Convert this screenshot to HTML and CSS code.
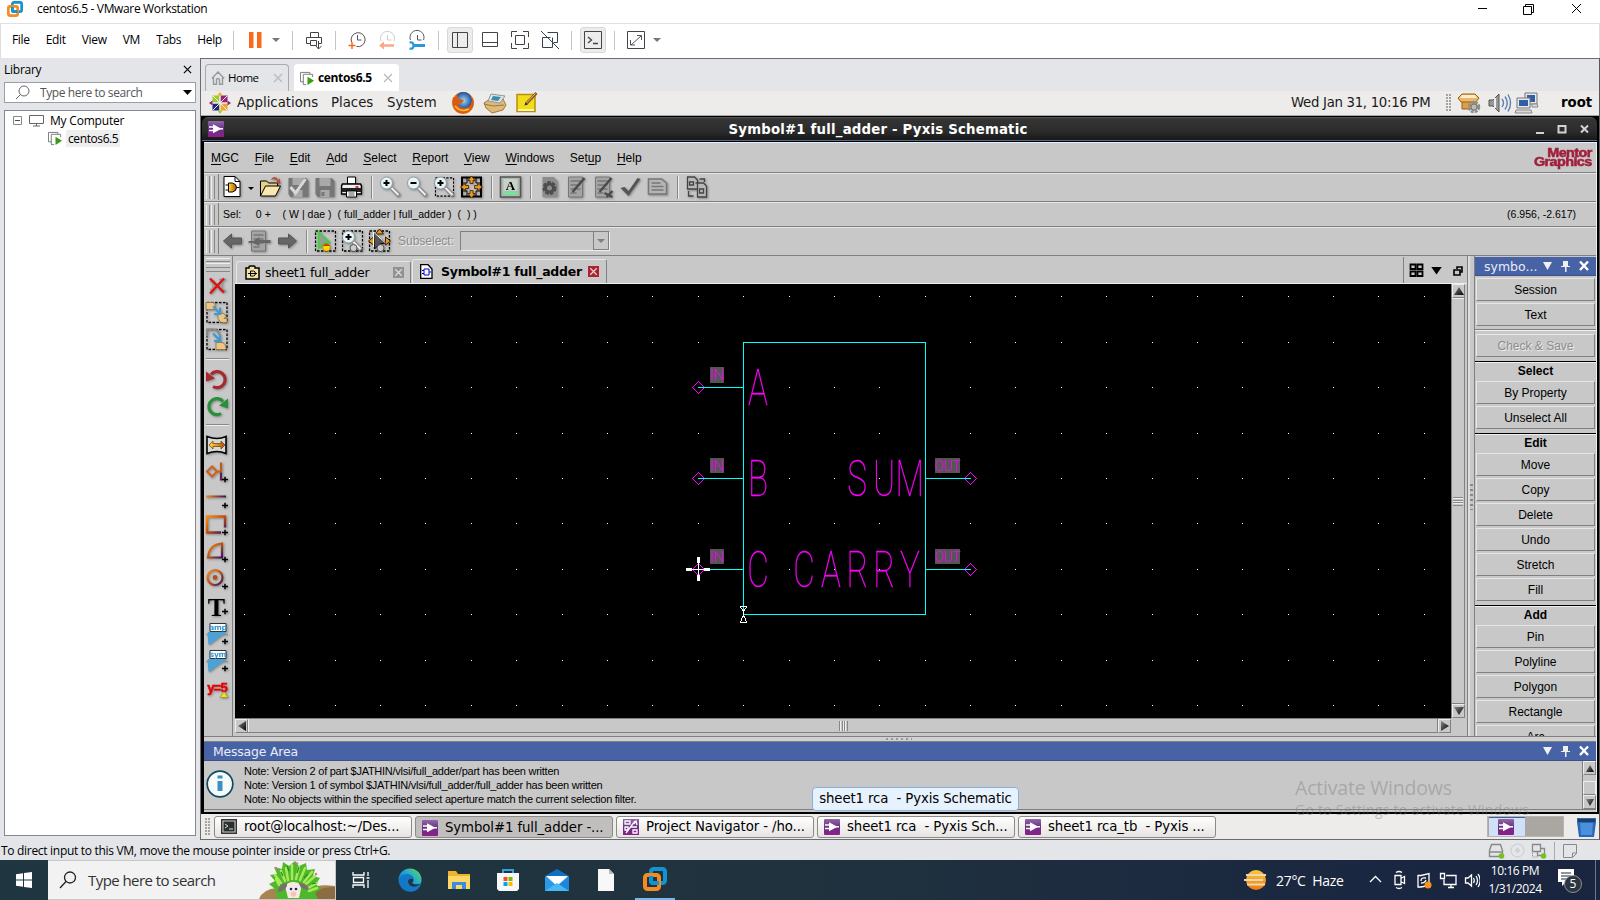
FILE: index.html
```html
<!DOCTYPE html>
<html lang="en">
<head>
<meta charset="utf-8">
<title>centos6.5 - VMware Workstation</title>
<link rel="stylesheet" href="styles.css">
</head>
<body>
<svg class="defs" width="0" height="0">
<defs>
<linearGradient id="purple" x1="0" y1="0" x2="0" y2="1"><stop offset="0" stop-color="#8f6aa5"/><stop offset=".5" stop-color="#6b2f86"/><stop offset="1" stop-color="#8d1f8a"/></linearGradient>
<linearGradient id="ember" x1="0" y1="0" x2="1" y2="1"><stop offset="0" stop-color="#ff8a10"/><stop offset=".5" stop-color="#c05010"/><stop offset="1" stop-color="#3a1060"/></linearGradient>
<linearGradient id="emberH"><stop offset="0" stop-color="#ff8a10"/><stop offset="1" stop-color="#3a1060"/></linearGradient>
<linearGradient id="gold"><stop offset="0" stop-color="#ffe030"/><stop offset="1" stop-color="#b05010"/></linearGradient>
<linearGradient id="edge" x1="0" y1="1" x2="1" y2="0"><stop offset="0" stop-color="#0b5cad"/><stop offset=".5" stop-color="#1b9de2"/><stop offset="1" stop-color="#5be05a"/></linearGradient>
<linearGradient id="sun" x1="0" y1="0" x2="0" y2="1"><stop offset="0" stop-color="#ffc83a"/><stop offset="1" stop-color="#f07a10"/></linearGradient>
<linearGradient id="dark" x1="0" y1="0" x2="1" y2="1"><stop offset="0" stop-color="#888"/><stop offset="1" stop-color="#000"/></linearGradient>
<radialGradient id="globe"><stop offset="0" stop-color="#9fd8f5"/><stop offset="1" stop-color="#1d4f9a"/></radialGradient>
<symbol id="pyxis" viewBox="0 0 16 16"><rect width="16" height="16" rx="1" fill="url(#purple)"/><path d="M1 6h5M1 9.500h5M11 7.800h4" stroke="#fff" stroke-width="1.400"/><path d="M5 3.200l8.500 4.600L5 12.300z" fill="#fff"/></symbol>
<symbol id="vmw" viewBox="0 0 24 24"><rect x="8" y="2" width="14" height="14" rx="2.500" fill="none" stroke="#1094d2" stroke-width="4"/><rect x="2" y="8" width="14" height="14" rx="2.500" fill="none" stroke="#f68b1f" stroke-width="4"/><path d="M8 9v5q0 2 2 2h6" fill="none" stroke="#1094d2" stroke-width="4"/></symbol>
<symbol id="vmrun" viewBox="0 0 16 16"><path d="M3.500 11.500h-3V1.500h10v2M6.500 14.500h-3V3.500h10v3" fill="none" stroke="#777"/><path d="M8 6l7 4.500L8 15z" fill="#3c9a10"/></symbol>
<symbol id="cx" viewBox="0 0 10 10"><path d="M1 1l8 8M9 1l-8 8" fill="none" stroke="currentColor" stroke-width="1.300"/></symbol>
<symbol id="bx" viewBox="0 0 12 12"><rect width="12" height="12" fill="currentColor"/><path d="M2.500 2.500l7 7M9.500 2.500l-7 7" stroke="#ddd" stroke-width="1.300"/></symbol>
<symbol id="plus" viewBox="0 0 6 6"><path d="M3 0v6M0 3h6" stroke="#000" stroke-width="1.500"/></symbol>
<symbol id="lens" viewBox="0 0 22 22"><path d="M12 12l8 8" stroke="#888" stroke-width="4"/><path d="M12 12l7 7" stroke="#eee" stroke-width="2"/><circle cx="7" cy="7" r="6" fill="#e8f4f6" stroke="#8aa0a8"/></symbol>
<symbol id="page" viewBox="0 0 22 22"><path d="M2.500.500h11l5 5v15h-16z" fill="#fff" stroke="#000"/><path d="M13.500.500v5h5" fill="none" stroke="#000"/></symbol>
<symbol id="gpage" viewBox="0 0 22 22"><path d="M3 1h14v20H3z" fill="#a4a4a4" stroke="#777"/><path d="M5 5h10M5 9h10M5 13h10M5 17h6" stroke="#777" stroke-width="1.300"/></symbol>
<symbol id="marq" viewBox="0 0 22 22"><rect x="1" y="1" width="20" height="20" fill="none" stroke="#000" stroke-dasharray="2.500 1.500" stroke-width="1.300"/></symbol>
<symbol id="dock" viewBox="0 0 50 12"><path d="M1 2h9l-4.500 8z" fill="#f0f0f0"/><path d="M21 1h5v5h2v1h-9V6h2zM23 7h1.500v5H23z" fill="#eee"/><path d="M38 1.500l8 8.500M46 1.500L38 10" stroke="#fff" stroke-width="2.400"/></symbol>
<symbol id="printer" viewBox="0 0 22 22"><path d="M7 1h8v7H7z" fill="#fff" stroke="#000"/><path d="M2 8h18l1 2v8H1v-8z" fill="#eee" stroke="#000" stroke-width="1.500"/><path d="M1 12h20v4H1z" fill="#222"/><path d="M6 15h10v6H6z" fill="#fff" stroke="#000"/><path d="M8 17h6M8 19h6" stroke="#555"/><path d="M15 11h3" stroke="#d00" stroke-width="1.500"/></symbol>
<g id="dots"><path stroke="#fff" d="M9 .5h1M54 .5h1M100 .5h1M145 .5h1M190 .5h1M236 .5h1M281 .5h1M327 .5h1M372 .5h1M417 .5h1M463 .5h1M508 .5h1M554 .5h1M599 .5h1M644 .5h1M690 .5h1M735 .5h1M780 .5h1M826 .5h1M871 .5h1M917 .5h1M962 .5h1M1007 .5h1M1053 .5h1M1098 .5h1M1143 .5h1M1189 .5h1"/></g>
</defs>
</svg>

<header class="titlebar">
  <svg class="app-logo" width="16" height="16"><use href="#vmw"/></svg>
  <span class="app-title">centos6.5 - VMware Workstation</span>
  <svg class="win-ctl" width="110" height="18" fill="none" stroke="#000"><path d="M3 8.500h9M48.500 6.500h8v8h-8zM50.500 6.500v-2h8v8h-2M97 4l9 9M106 4l-9 9"/></svg>
</header>

<nav class="vmbar">
  <div class="vmmenu"><span>File</span><span>Edit</span><span>View</span><span>VM</span><span>Tabs</span><span>Help</span></div>
  <i class="vsep w14"></i>
  <svg class="pause" width="24" height="24"><path d="M6 4h4.500v16H6zM14 4h4.500v16H14z" fill="#f96a1f"/></svg>
  <svg width="18" height="24"><path d="M5 10h8l-4 4z" fill="#777"/></svg>
  <i class="vsep w14"></i>
  <svg width="30" height="24" fill="none" stroke="#444"><path d="M11.500 9.500v-5h8v5M7.500 9.500h15v6h-3M7.500 9.500v6h4M11.500 12.500h6v5h-6zM17 18l2.500 3 3-3"/><path d="M19.500 13v8"/></svg>
  <i class="vsep w13"></i>
  <svg width="30" height="24" fill="none" stroke="#555"><path d="M9.500 14a7 7 0 1 1 5 4.500M15.500 7v5h4"/><path d="M10 14v7M6.500 17.500h7" stroke="#f96a1f" stroke-width="1.500"/></svg>
  <svg width="30" height="24" fill="none" stroke="#ccc"><path d="M9 13a7 7 0 1 1 13 0M15.500 7v5h4"/><path d="M10 17.500h12" stroke="#fba888" stroke-width="2.500"/><path d="M7 17.500l5-4v8z" fill="#fba888" stroke="none"/></svg>
  <svg width="30" height="24" fill="none" stroke="#555"><path d="M8.500 12a7 7 0 1 1 13 0M15.500 7v5h4"/><path d="M11 17.500h12" stroke="#2a97dc" stroke-width="3"/><path d="M7.500 14.500q4-1 4 3t-4 3" stroke="#2a97dc" stroke-width="2.200"/></svg>
  <i class="vsep w13"></i>
  <span class="toggled"><svg width="24" height="24" fill="none" stroke="#444"><path d="M4.500 4.500h15v15h-15zM9.500 4.500v15"/></svg></span>
  <svg width="30" height="24" fill="none" stroke="#444"><path d="M7.500 4.500h15v14h-15zM7.500 14.500h15"/></svg>
  <svg width="30" height="24" fill="none" stroke="#444"><path d="M6.500 9V3.500H12M18 3.500h5.500V9M23.500 15v5.500H18M12 20.500H6.500V15M10.500 7.500h9v9h-9z"/></svg>
  <svg width="30" height="24" fill="none" stroke="#35424e"><path d="M12.500 4.500h10v10h-4M17.500 9.500v10h-10v-10h8M6 3l18 18"/></svg>
  <i class="vsep w13"></i>
  <span class="toggled"><svg width="24" height="24" fill="none" stroke="#444"><path d="M3.500 3.500h17v17h-17z"/><path d="M7 9l3.500 3L7 15M12 15.500h5" stroke-width="1.300"/></svg></span>
  <i class="vsep w13"></i>
  <svg width="30" height="24" fill="none" stroke="#444"><path d="M6.500 3.500h17v17h-17z"/><path d="M16 7.500h4.500V12M9.500 12v5H14M20 8l-10 9" stroke-width=".9"/></svg>
  <svg width="12" height="24"><path d="M2 10h8l-4 4z" fill="#777"/></svg>
</nav>

<div class="workspace">
  <aside class="library">
    <div class="lib-head"><span>Library</span><svg class="lib-x" width="9" height="9"><use href="#cx"/></svg></div>
    <div class="lib-search">
      <svg width="16" height="16" fill="none" stroke="#666"><circle cx="9" cy="6" r="5"/><path d="M5.500 9.500L1 14"/></svg>
      <span>Type here to search</span>
      <svg width="9" height="5"><path d="M0 0h9L4.500 5z"/></svg>
    </div>
    <div class="tree">
      <div class="node root"><svg width="9" height="9" fill="none"><path d="M.5.500h8v8h-8z" stroke="#888"/><path d="M2 4.500h5" stroke="#356"/></svg><svg width="15" height="12" fill="none" stroke="#666"><path d="M.5.500h14v8h-14zM4 11h7M7.500 9v2"/></svg><span>My Computer</span></div>
      <div class="node child"><svg width="15" height="15"><use href="#vmrun"/></svg><span>centos6.5</span></div>
    </div>
  </aside>

  <section class="guest">
    <div class="vmtabs">
      <div class="vmtab home"><svg width="14" height="14" fill="none" stroke="#999" stroke-width="1.400"><path d="M.8 7.500L7 1l6.200 6.500M2.500 6.500v6.800h3V9q0-1.500 1.500-1.500T8.500 9v4.300h3V6.500"/></svg><span>Home</span><svg class="tx" width="10" height="10"><use href="#cx"/></svg></div>
      <div class="vmtab active"><svg width="15" height="15"><use href="#vmrun"/></svg><span>centos6.5</span><svg class="tx" width="10" height="10"><use href="#cx"/></svg></div>
    </div>

    <div class="gpanel">
      <svg width="22" height="22"><g transform="translate(11 11)"><path d="M-7.500-7.500h7v7h-7z" fill="#9ccd2a"/><path d="M.5-7.500h7v7h-7z" fill="#932279"/><path d="M-7.500.500h7v7h-7z" fill="#262577"/><path d="M.5.500h7v7h-7z" fill="#efa724"/><path d="M0-11l2.500 3.500h-5z" fill="#efa724"/><path d="M11 0L7.500 2.500v-5z" fill="#932279"/><path d="M0 11l2.500-3.500h-5z" fill="#9ccd2a"/><path d="M-11 0l3.500 2.500v-5z" fill="#932279"/><path d="M-7-7L7 7M7-7L-7 7M0-7V7M-7 0H7" stroke="#eee" stroke-width="1"/></g></svg>
      <span class="g1">Applications</span><span class="g2">Places</span><span class="g3">System</span>
      <svg class="ff" width="24" height="24"><circle cx="12" cy="12" r="11" fill="#e8701a"/><circle cx="12.500" cy="9.500" r="8.500" fill="url(#globe)"/><path d="M2 6Q0 17 8 21.500q9 3 13.500-5Q24 10 21 6q1 9-6 11-7 .5-8-4l4-1 2-3-5-1-2-4-2 3z" fill="#d95b12"/><path d="M4 15q6 7 14 3" fill="none" stroke="#ffc030" stroke-width="1.500"/></svg>
      <svg width="32" height="24"><path d="M5 12l6-4h13l3 6-3 5-11 3-6-5z" fill="#e0b878" stroke="#a07840"/><path d="M12 3l14 2-5 7-12-2z" fill="#dce6ea" stroke="#8a9a9a"/><path d="M14 5l8 1-3 4-7-1z" fill="#3f8ba8"/><path d="M5 13l9 2 11-1" fill="none" stroke="#a07840"/></svg>
      <svg width="30" height="24"><path d="M6 3.500h18v17H6z" fill="#f3dc1c" stroke="#b8900a" stroke-width="1.500"/><path d="M7 18h16v2H7z" fill="#fff6b0"/><path d="M25.500 2L15 13" stroke="#8a5a20" stroke-width="3"/><path d="M24.500 2.500L15.500 12" stroke="#e2b66a"/><path d="M13.500 14.500l1-3 2 2z" fill="#222"/></svg>
      <span class="gclock">Wed Jan 31, 10:16 PM</span>
      <i class="grip"></i>
      <svg class="box" width="24" height="24"><path d="M5 9h14v9H5z" fill="#dba04e" stroke="#9a6010"/><path d="M5 3h13l4 4-3 4H4L1 7z" fill="#eeb766" stroke="#9a6010"/><path d="M5 4h13l2 3H3z" fill="#fbeccd"/><circle cx="17" cy="16" r="4.500" fill="none" stroke="#8c8f8c" stroke-width="3.500" stroke-dasharray="2.600 1"/><circle cx="17" cy="16" r="3" fill="#bbb" stroke="#777"/></svg>
      <svg width="29" height="24"><path d="M4 9h4l6-6v18l-6-6H4z" fill="#999" stroke="#555"/><path d="M10 7v10" stroke="#eee" stroke-width="2"/><path d="M17 8q3 4 0 8M20 5.500q4.500 6.500 0 13M23 3.500q5 8.500 0 17" fill="none" stroke="#5b80b8" stroke-width="1.400"/></svg>
      <svg width="28" height="24"><path d="M11 2h12v11H11z" fill="#e8e8e8" stroke="#777"/><path d="M13 4h8v7h-8z" fill="#2f5fa6"/><path d="M3 7h13v10H3z" fill="#e8e8e8" stroke="#777"/><path d="M5 9h9v6H5z" fill="#2f5fa6"/><path d="M2 19h15l1 3H1zM18 13h5l1 3h-6z" fill="#ddd" stroke="#888"/></svg>
      <b class="groot">root</b>
    </div>

    <div class="desk">
      <div class="xtitle"><svg width="16" height="16"><use href="#pyxis"/></svg><b>Symbol#1 full_adder - Pyxis Schematic</b><svg width="54" height="14" fill="none" stroke="#d2d2d2" stroke-width="2"><path d="M1 11h8M23.500 4h7v6.500h-7z" /><path d="M46 3.500l7 7M53 3.500l-7 7"/></svg></div>
      <div class="app">
        <div class="row menu">
          <span><u>M</u>GC</span><span><u>F</u>ile</span><span><u>E</u>dit</span><span><u>A</u>dd</span><span><u>S</u>elect</span><span><u>R</u>eport</span><span><u>V</u>iew</span><span><u>W</u>indows</span><span>Set<u>u</u>p</span><span><u>H</u>elp</span>
          <div class="mentor"><b>Mentor</b><b>Graphics</b></div>
        </div>

        <div class="row tools">
          <i class="handle"></i>
          <svg class="ic" viewBox="-2.500 0 27 24"><use href="#page" x="0" y="1" width="22" height="22"/><path d="M4 10h4M4 15h4M14 12.500h4" stroke="#000"/><path d="M7 8h4q4 1 4 4.500T11 17H7z" fill="url(#gold)" stroke="#000"/></svg>
          <svg class="drop" width="10" height="24"><path d="M2 12h6l-3 3z"/></svg>
          <svg class="ic" viewBox="-2.500 0 27 24"><path d="M1 21V6h6l2 2h9v4" fill="#e6cf86" stroke="#000"/><path d="M1 21l5-10h15l-5 10z" fill="#f8e7ae" stroke="#000"/><path d="M11 5q4-6 8 0l1-2 1 6-5-1 2-2q-3-3-7-1z" fill="#b05038"/></svg>
          <svg class="ic" viewBox="-2.500 0 27 24"><path d="M2 3h18l2 3v16H4l-2-3z" fill="#777"/><path d="M6 3h11v7H6zM7 15h9v7H7z" fill="#a9a9a9"/><path d="M4 12l5 6L19 4" fill="none" stroke="#d8d8d8" stroke-width="3"/></svg>
          <svg class="ic" viewBox="-2.500 0 27 24"><path d="M2 3h16l3 3v16H4l-2-3z" fill="#777"/><path d="M6 3h11v8H6zM7 15h9v7H7z" fill="#a9a9a9"/><path d="M8 17h3v4H8z" fill="#777"/></svg>
          <svg class="ic" viewBox="-2.500 0 27 24"><use href="#printer" y="1" width="22" height="22"/></svg>
          <i class="tsep"></i>
          <svg class="ic" viewBox="-2.500 0 27 24"><use href="#lens" y="1" width="22" height="22"/><path d="M7 5v6M4 8h6" stroke="#000" stroke-width="2"/></svg>
          <svg class="ic" viewBox="-2.500 0 27 24"><use href="#lens" y="1" width="22" height="22"/><path d="M4 8h6" stroke="#000" stroke-width="2"/></svg>
          <svg class="ic" viewBox="-2.500 0 27 24"><use href="#marq" x="1" y="2" width="20" height="20"/><use href="#lens" y="1" width="22" height="22"/><path d="M7 5v6M4 8h6" stroke="#000" stroke-width="2"/></svg>
          <svg class="ic" viewBox="-2.500 0 27 24"><path d="M1.500 2.500h19v19h-19z" fill="none" stroke="#000" stroke-width="2"/><path d="M1.500 8h5V2.500M20.500 8h-5V2.500M1.500 16h5v5.500M20.500 16h-5v5.500" fill="none" stroke="#000"/><path d="M11 1l3.500 4.500h-2v3h-3v-3h-2zM11 23l3.500-4.500h-2v-3h-3v3h-2zM0 12l5-3.500v2h3v3H5v2zM22 12l-5-3.500v2h-3v3h3v2z" fill="#e89a1c" stroke="#402000" stroke-width=".8"/></svg>
          <i class="tsep"></i>
          <svg class="ic" viewBox="-2.500 0 27 24"><path d="M1 2h20v20H1z" fill="#aeb8ae" stroke="#555" stroke-width="1.500"/><path d="M4 4h14v12H4z" fill="#c9d2c9"/><path d="M4 16.500h14v3H4z" fill="#6ce896"/><text x="11" y="15" class="abig">A</text></svg>
          <i class="tsep"></i>
          <svg class="ic" viewBox="-2.500 0 27 24"><path d="M4 2h11l4 4v16H4z" fill="#8c8c8c"/><circle cx="11" cy="13" r="5" fill="none" stroke="#4d4d4d" stroke-width="4" stroke-dasharray="3 1.200"/><circle cx="11" cy="13" r="4" fill="none" stroke="#4d4d4d" stroke-width="3"/></svg>
          <svg class="ic" viewBox="-2.500 0 27 24"><use href="#gpage" y="1" width="22" height="22"/><path d="M7 17L19 3" stroke="#4a4a4a" stroke-width="2.500"/></svg>
          <svg class="ic" viewBox="-2.500 0 27 24"><use href="#gpage" y="1" width="22" height="22"/><path d="M7 17L19 3M12 18l8 4M14 22l6-6" fill="none" stroke="#4a4a4a" stroke-width="2.300"/></svg>
          <svg class="ic" viewBox="-2.500 0 27 24"><path d="M1 13l4-1 4 4L18 3l3 1L9 21z" fill="#555"/></svg>
          <svg class="ic" viewBox="-2.500 0 27 24"><path d="M2 4h13l5 4v11H2z" fill="#b4b4b4" stroke="#777" stroke-width="1.500"/><path d="M5 8h9M5 11.500h12M5 15h12" stroke="#777" stroke-width="1.500"/></svg>
          <i class="tsep"></i>
          <svg class="ic" viewBox="-2.500 0 27 24" fill="#b8b8b8" stroke="#444" stroke-width="1.300"><path d="M2 2h7l3 3v9H2zM10 8h8l3 3v11h-9v-8"/><path d="M4 7h4v3H4zM14 14h4v4h-4zM3 16v5h5M14 4h5v3" fill="none"/></svg>
        </div>

        <div class="row sel"><i class="handle"></i><pre>Sel:     0 +    ( W | dae )  ( full_adder | full_adder )  (  ) )</pre><span class="coord">(6.956, -2.617)</span></div>

        <div class="row tools navrow">
          <i class="handle"></i>
          <svg class="ic" viewBox="-2.500 0 27 24"><path d="M2 12l8-7v4h10v6H10v4z" fill="#666" stroke="#555"/></svg>
          <svg class="ic" viewBox="-2.500 0 27 24"><use href="#gpage" y="1" width="22" height="22"/><path d="M0 12h5l6-4v3h11v3H11v3l-6-3H0z" fill="#666"/></svg>
          <svg class="ic" viewBox="-2.500 0 27 24"><path d="M21 12l-8-7v4H3v6h10v4z" fill="#666" stroke="#555"/></svg>
          <i class="tsep"></i>
          <svg class="ic" viewBox="-2.500 0 27 24"><use href="#marq" y="1" width="22" height="22"/><path d="M4 3l11 10-5 1-6 5z" fill="#999" stroke="#2ae02a" stroke-width="1.500"/><circle cx="12" cy="18.500" r="3.800" fill="#ffd800" stroke="#a07000" stroke-width=".7"/><path d="M8.500 17q3.500-4 7 0z" fill="#e02000"/></svg>
          <svg class="ic" viewBox="-2.500 0 27 24"><use href="#marq" y="1" width="22" height="22"/><use href="#lens" y="1" width="22" height="22"/><path d="M7 5v6M4 8h6" stroke="#000" stroke-width="2"/><circle cx="12" cy="19" r="3.500" fill="#ccc" stroke="#555"/></svg>
          <svg class="ic" viewBox="-2.500 0 27 24"><use href="#marq" y="1" width="22" height="22"/><path d="M11 0l4 5H7zM0 12l5-4v8zM22 12l-5-4v8z" fill="#e89a1c" stroke="#402000"/><path d="M5 3l12 11-6 1-5 5z" fill="#555" stroke="#000"/><path d="M5 3l12 11M5 3v15" stroke="#fff"/><circle cx="12" cy="19" r="3.500" fill="#ccc" stroke="#555"/></svg>
          <span class="subsel">Subselect:</span>
          <span class="combo"><i><svg width="8" height="4"><path d="M0 0h8L4 4z" fill="#808080"/></svg></i></span>
        </div>

        <div class="main">
          <div class="ltools">
            <i class="hhandle"></i>
            <svg class="li" viewBox="-2 -2.500 24 27"><path d="M3 7h3v8H3M12 5h7M12 16h7M15 5v11" stroke="#999" fill="none" stroke-width="1.500"/><path d="M3 4l14 14M17 4L3 19" stroke="#e01010" stroke-width="2.400"/></svg>
            <svg class="li" viewBox="-2 -2.500 24 27"><use href="#marq" x="-1" y="0" width="22" height="22"/><path d="M-1 1h7l2 2v5h-9zM11 12h6l2 3-2 2h3v4h-6l-3-4z" fill="#e8c888" stroke="#96703a" stroke-width=".8"/><path d="M6 5l7 7M13 6v6.500H7" fill="none" stroke="#3c9ad8" stroke-width="2"/></svg>
            <svg class="li" viewBox="-2 -2.500 24 27"><use href="#marq" x="-1" y="0" width="22" height="22"/><path d="M0 8V1h7q5 1 5 5" fill="none" stroke="#888" stroke-width="2"/><path d="M9 14h6q4 1 4 7H9z" fill="#e8c888" stroke="#96703a" stroke-width=".8"/><path d="M6 5l7 7M13 6v6.500H7" fill="none" stroke="#3c9ad8" stroke-width="2"/></svg>
            <i class="lsep"></i>
            <svg class="li" viewBox="-2 -2.500 24 27"><path d="M4 7a8 8 0 1 1 2 12" fill="none" stroke="#a82830" stroke-width="3.200"/><path d="M-1 14V4l9 7z" fill="#a82830"/></svg>
            <svg class="li" viewBox="-2 -2.500 24 27"><path d="M16 7a8 8 0 1 0-2 12" fill="none" stroke="#289038" stroke-width="3.200"/><path d="M21 14V4l-9 7z" fill="#289038"/></svg>
            <i class="lsep"></i>
            <svg class="li" viewBox="-2 -2.500 24 27"><path d="M0 3q10 4 19 0v17q-9-4-19 0z" fill="#d8d8d8" stroke="#000" stroke-width="1.600"/><path d="M2 11.500l4-4V10h8V7.500l4 4-4 4V13H6v2.500z" fill="url(#gold)" stroke="#703800" stroke-width=".7"/></svg>
            <svg class="li" viewBox="-2 -2.500 24 27"><path d="M0 11l5-5 5 5-5 5zM10 11h4" fill="none" stroke="#d0601c" stroke-width="2"/><path d="M14 2v10" stroke="#c8581c" stroke-width="2.200"/><path d="M14 12v8" stroke="#5a2058" stroke-width="2.200"/><use href="#plus" x="15" y="16" width="6" height="6"/></svg>
            <svg class="li" viewBox="-2 -2.500 24 27"><path d="M-1 8h20v2H-1z" fill="url(#emberH)"/><use href="#plus" x="15" y="15" width="6" height="6"/></svg>
            <svg class="li" viewBox="-2 -2.500 24 27"><path d="M14 18H0V2h18v11" fill="none" stroke="url(#ember)" stroke-width="2.400"/><use href="#plus" x="15" y="15" width="6" height="6"/></svg>
            <svg class="li" viewBox="-2 -2.500 24 27"><path d="M1 16Q2 3 15 2v14z" fill="none" stroke="url(#ember)" stroke-width="2.200"/><use href="#plus" x="15" y="15" width="6" height="6"/></svg>
            <svg class="li" viewBox="-2 -2.500 24 27"><circle cx="8" cy="9" r="7.500" fill="none" stroke="url(#ember)" stroke-width="2.200"/><circle cx="8" cy="9" r="2.400" fill="#b84a20"/><use href="#plus" x="15" y="15" width="6" height="6"/></svg>
            <svg class="li" viewBox="-2 -2.500 24 27"><text x="9.500" y="20" class="tbig">T</text><use href="#plus" x="15" y="13" width="6" height="6"/></svg>
            <svg class="li" viewBox="-2 -2.500 24 27"><path d="M-1 12h22M1 10h17L2 22z" fill="#4aa2d6" stroke="#4aa2d6"/><path d="M3 1h16v8H3z" fill="#fff" stroke="#333"/><text x="11" y="7.500" class="tiny">amp</text><use href="#plus" x="15" y="16" width="6" height="6"/></svg>
            <svg class="li" viewBox="-2 -2.500 24 27"><path d="M-1 12h22M1 10h17L2 22z" fill="#4aa2d6" stroke="#4aa2d6"/><path d="M3 1h16v8H3z" fill="#fff" stroke="#333"/><text x="11" y="7.500" class="tiny">sym</text><use href="#plus" x="15" y="16" width="6" height="6"/></svg>
            <svg class="li" viewBox="-2 -2.500 24 27"><text x="10" y="15" class="y5">y=5</text><path d="M13 21l4-6 4 6z" fill="#f0e020" stroke="#888820" stroke-width=".6"/></svg>
          </div>

          <div class="center">
            <div class="doctabs">
              <div class="dtab"><svg width="15" height="15"><path d="M1 3h3V2q0-1 1-1h4q1 0 1 1v1h4v11H1z" fill="#f3e3a4" stroke="#000" stroke-width="1.500"/><path d="M3 8.500h9M5.500 6h3q2 .5 2 2.500t-2 2.500h-3z" fill="#f3e3a4" stroke="#000"/></svg><span>sheet1 full_adder</span><svg class="g" width="11" height="11"><use href="#bx"/></svg></div>
              <div class="dtab on"><svg width="13" height="15"><path d="M.7.700H8L12 5v9.300H.7z" fill="#fff" stroke="#000" stroke-width="1.300"/><path d="M4 5h5v6H4zM2 6.500h2M2 9.500h2M9 8h2" fill="none" stroke="#00d"/></svg><b>Symbol#1 full_adder</b><svg class="r" width="11" height="11"><use href="#bx"/></svg></div>
              <div class="dbtn"><svg width="60" height="20" fill="none" stroke="#000" stroke-width="1.800"><path d="M2.500 3.500h5v4.500h-5zM9.500 3.500h5v4.500h-5zM2.500 10.500h5V15h-5zM9.500 10.500h5V15h-5z"/><path d="M25 7h7l-3.500 5z" fill="#000"/><path d="M46 9h6v5h-6zM49 8V6h5v5h-2" stroke-width="1.600"/></svg></div>
            </div>
            <div class="view">
              <svg class="canvas" width="1216" height="434" shape-rendering="crispEdges">
                <rect width="1216" height="434"/>
                <use href="#dots" y="12"/><use href="#dots" y="58"/><use href="#dots" y="103"/><use href="#dots" y="149"/><use href="#dots" y="194"/><use href="#dots" y="239"/><use href="#dots" y="285"/><use href="#dots" y="330"/><use href="#dots" y="376"/><use href="#dots" y="421"/>
                <g fill="#555"><path d="M475 83h14v16h-14zM475 174h14v15h-14zM475 265h14v15h-14zM700 174h25v15h-25zM700 265h25v15h-25z"/></g>
                <g fill="none" stroke="#f0f"><path d="M457.500 103.500l6-6 6 6-6 6zM457.500 194.500l6-6 6 6-6 6zM457.500 285.500l6-6 6 6-6 6zM729.500 194.500l6-6 6 6-6 6zM729.500 285.500l6-6 6 6-6 6z"/></g>
                <path d="M508.500 58.500h182v272h-182zM463 103.500h45M463 194.500h45M463 285.500h45M691 194.500h45M691 285.500h45" fill="none" stroke="#0ff"/>
                <g class="stroke-lg">
                  <text transform="translate(523 121) scale(.68 1)">A</text>
                  <text transform="translate(523 212) scale(.68 1)">B</text>
                  <text transform="translate(523 303) scale(.68 1)">C</text>
                  <text transform="translate(622 212) scale(.68 1)" x="0 39.700 77.500">SUM</text>
                  <text transform="translate(569 303) scale(.68 1)" x="0 39.500 78.500 118 156">CARRY</text>
                </g>
                <g class="stroke-sm"><text x="482" y="96">IN</text><text x="482" y="187">IN</text><text x="482" y="278">IN</text><text transform="translate(712.500 187) scale(.9 1)">OUT</text><text transform="translate(712.500 278) scale(.9 1)">OUT</text></g>
                <path d="M463.500 273v24M451 285.500h24" stroke="#fff"/><path d="M463.500 273v6M463.500 291v6M451 285.500h6M469 285.500h6" stroke="#fff" stroke-width="3"/>
                <path d="M505.500 324v-1.500h6v1.500M506.500 324l2 4 2-4M508.500 326v7M508.500 331l-2 4-1 3.500h6l-1-3.500z" fill="none" stroke="#fff"/>
              </svg>
              <div class="vscroll"><i class="sbtn"><svg width="10" height="10"><path d="M0 9l5-8 5 8z" fill="url(#dark)"/></svg></i><i class="vthumb"></i><i class="sbtn"><svg width="10" height="10"><path d="M0 1l5 8 5-8z" fill="url(#dark)"/></svg></i></div>
            </div>
            <div class="hscroll"><i class="sbtn"><svg width="10" height="10"><path d="M9 0L1 5l8 5z" fill="url(#dark)"/></svg></i><i class="hthumb"></i><i class="sbtn"><svg width="10" height="10"><path d="M1 0l8 5-8 5z" fill="url(#dark)"/></svg></i></div>
          </div>

          <div class="vsplit"><i></i></div>

          <div class="palette">
            <div class="dockhead"><span>symbo...</span><svg width="50" height="12"><use href="#dock"/></svg></div>
            <div class="pbody">
              <div class="pb">Session</div><div class="pb">Text</div>
              <hr class="soft">
              <div class="pb off">Check &amp; Save</div>
              <h4>Select</h4>
              <div class="pb">By Property</div><div class="pb">Unselect All</div>
              <h4>Edit</h4>
              <div class="pb">Move</div><div class="pb">Copy</div><div class="pb">Delete</div><div class="pb">Undo</div><div class="pb">Stretch</div><div class="pb">Fill</div>
              <h4>Add</h4>
              <div class="pb">Pin</div><div class="pb">Polyline</div><div class="pb">Polygon</div><div class="pb">Rectangle</div><div class="pb">Arc</div>
            </div>
          </div>
        </div>

        <div class="hsplit"><i></i></div>
        <div class="dockhead msg"><span>Message Area</span><svg width="50" height="12"><use href="#dock"/></svg></div>
        <div class="messages">
          <svg class="info" width="28" height="28"><circle cx="14" cy="14" r="12.800" fill="#f6fafb" stroke="#124a60" stroke-width="1.700"/><path d="M11.500 5.500h5v3h-5zM11.500 11h5v10h-5z" fill="#3b8fc8"/></svg>
          <div class="lines"><p>Note: Version 2 of part $JATHIN/vlsi/full_adder/part has been written</p><p>Note: Version 1 of symbol $JATHIN/vlsi/full_adder/full_adder has been written</p><p>Note: No objects within the specified select aperture match the current selection filter.</p></div>
          <div class="mscroll"><i class="sbtn"><svg width="8" height="9"><path d="M0 8l4-7 4 7z" fill="url(#dark)"/></svg></i><i class="mthumb"></i><i class="sbtn"><svg width="8" height="9"><path d="M0 1l4 7 4-7z" fill="url(#dark)"/></svg></i></div>
        </div>
      </div>
    </div>

    <div class="gtask">
      <i class="grip"></i>
      <div class="task"><svg width="16" height="15"><path d="M.7.700h14.600v13.600H.7z" fill="#ccc" stroke="#333" stroke-width="1.400"/><path d="M2.500 2.500h11v10h-11z" fill="#2a3030"/><path d="M4 5l3 2-3 2M8 10h4" fill="none" stroke="#ddd"/></svg><span>root@localhost:~/Des...</span></div>
      <div class="task down"><svg width="16" height="16"><use href="#pyxis"/></svg><span>Symbol#1 full_adder -...</span></div>
      <div class="task"><svg width="16" height="16"><rect width="16" height="16" fill="url(#purple)"/><path d="M2 2h5v3H2zM2 8h3v3H2zM10 11h4v3h-4zM3 14l9-12M8 8h6M11 5l2-3 1 4" fill="none" stroke="#fff" stroke-width="1.300"/></svg><span>Project Navigator - /ho...</span></div>
      <div class="task"><svg width="16" height="16"><use href="#pyxis"/></svg><span>sheet1 rca&nbsp; - Pyxis Sch...</span></div>
      <div class="task"><svg width="16" height="16"><use href="#pyxis"/></svg><span>sheet1 rca_tb&nbsp; - Pyxis ...</span></div>
      <div class="pager"><i><svg width="16" height="16"><use href="#pyxis"/></svg></i></div>
      <svg class="trash" width="19" height="20"><path d="M0 1h19v4l-2 15H2L0 5z" fill="#2868b4"/><path d="M1 2h17v3H1z" fill="#1d3f68"/><path d="M3 6h13l-1 12H4z" fill="#4a90dc"/></svg>
    </div>
    <div class="tooltip">sheet1 rca&nbsp; - Pyxis Schematic</div>
  </section>
</div>

<footer class="status">
  <span>To direct input to this VM, move the mouse pointer inside or press Ctrl+G.</span>
  <svg width="100" height="18" fill="none" stroke="#888"><path d="M6.500 8.500l2-6h9l2 6v6h-13zM6.500 10h13" stroke-width="1.400"/><circle cx="34.500" cy="8.500" r="6.500" stroke="#ccc"/><circle cx="34.500" cy="8.500" r="1.500" stroke="#bbb"/><path d="M49.500 2.500h8v7h-8zM57.500 6.500h4v7h-7v-4" stroke-width="1.300"/><path d="M49.500 11v4h5" stroke-dasharray="1 1"/><path d="M71.500 0v18" stroke="#aaa"/><path d="M80.500 2.500h13v9l-4 4h-9zM89.500 15v-4h4"/><g fill="#76c21c" stroke="none"><circle cx="18.500" cy="14" r="2.800"/><circle cx="60.500" cy="14" r="2.800"/></g></svg>
</footer>

<div class="taskbar">
  <div class="start"><svg width="16" height="16" fill="#fff"><path d="M0 2.200l7-1v6.300H0zM8 1.100L16 0v7.500H8zM0 8.500h7v6.300l-7-1zM8 8.500h8V16l-8-1.100z"/></svg></div>
  <div class="search"><svg width="18" height="18" fill="none" stroke="#222" stroke-width="1.300"><circle cx="11" cy="6.500" r="5.500"/><path d="M7 10.500L1 17"/></svg><span>Type here to search</span>
    <svg class="hog" width="76" height="38"><path d="M0 38q4-10 18-11h34q8-4 24-2v13z" fill="#a98450"/><path d="M50 38q4-12 26-12v12z" fill="#8c6c40"/><path d="M16 28l-6-5 6-3-5-6 7-1-3-7 8 2 1-7 6 4 6-5 4 5 7-3 1 7 8-1-2 7 7 2-4 6 5 5-6 4 3 6H18z" fill="#4fb82a"/><path d="M20 24l-3-6M26 20l-4-10M33 18V4M41 19l5-12M47 23l9-8M50 30l8-3M29 19l-2-12M37 18l3-12M45 21l8-10M49 27l9-5M22 22l-6-8" stroke="#a5ea58" stroke-width="2.500" stroke-linecap="round"/><path d="M24 15l-2-4M30 10l-2-5M38 12l2-6M45 17l4-4M53 23l4-1" stroke="#2a8a1c" stroke-width="1.200"/><path d="M27 29q-2-7 6-8 9-1 9 7l-2 9h-11z" fill="#f4ece4"/><path d="M28 22q-9 0-9 9 6 0 9-6zM40 22q9 0 10 7-6 0-9-4z" fill="#77706e"/><circle cx="32" cy="28" r="1.300" fill="#226"/><circle cx="37" cy="28" r="1.300" fill="#226"/><circle cx="34.500" cy="33" r="2.800" fill="#f8c4b8"/><g fill="#e86a9a"><circle cx="38" cy="2.500" r="1.200"/><circle cx="17" cy="7" r="1.200"/><circle cx="57" cy="13" r="1.200"/></g></svg>
  </div>
  <div class="tb"><svg width="18" height="18" fill="none" stroke="#fff" stroke-width="1.300"><path d="M1 1v3h11V1M1 17v-3h11v3M1.500 6.500h10v5h-10zM16 1v4M16 9v8M14.500 7h3"/></svg></div>
  <div class="tb"><svg width="24" height="24"><circle cx="12" cy="12" r="11.500" fill="url(#edge)"/><path d="M1 12q2-7 9-6 6 1 6 6-1 2-2 3 4 3 9 0-2 9-11 8.500Q2 22 1 12z" fill="#1378c8"/><path d="M10 13q1-3 5-2 1 2-1 4 2 2.500 9 .5-6 5-11 2-2-2-2-4.500z" fill="#22343e"/></svg></div>
  <div class="tb"><svg width="22" height="20"><path d="M0 1h8l2 3h12v14H0z" fill="#f0b42c"/><path d="M0 6h22v13H0z" fill="#ffd766"/><path d="M4 19v-7h14v7h-4v-4H8v4z" fill="#3a8de0"/></svg></div>
  <div class="tb"><svg width="24" height="24"><path d="M7 6V2h10v4" fill="none" stroke="#2ba6e0" stroke-width="2"/><path d="M1 5h22v16l-2 2H3l-2-2z" fill="#f8f8f8"/><path d="M7.500 9H11.500v4h-4z" fill="#f25022"/><path d="M12.500 9h4v4h-4z" fill="#7fba00"/><path d="M7.500 14h4v4h-4z" fill="#00a4ef"/><path d="M12.500 14h4v4h-4z" fill="#ffb900"/></svg></div>
  <div class="tb"><svg width="24" height="24"><path d="M0 8l12-7 12 7v15H0z" fill="#1270c0"/><path d="M0 9h24v14H0z" fill="#2a9ae8"/><path d="M1 8h22L12 18z" fill="#fff"/><path d="M12 18L24 9v14z" fill="#1d86dc"/><path d="M0 23l12-8 12 8z" fill="#48b8f4"/></svg></div>
  <div class="tb"><svg width="16" height="22"><path d="M0 0h11l5 5v17H0z" fill="#f8f8f8"/><path d="M11 0v5h5z" fill="#bbb"/></svg></div>
  <div class="tb run"><svg width="24" height="24"><use href="#vmw"/></svg></div>
  <div class="tray">
    <svg class="sunny" width="24" height="22"><circle cx="12" cy="11" r="10" fill="url(#sun)"/><path d="M2 6h20M0 11h19M3 15.500h18" stroke="#e8d8b8" stroke-width="2"/></svg>
    <span class="temp">27°C&nbsp; Haze</span>
    <svg class="icons" width="112" height="24" fill="none" stroke="#fff" stroke-width="1.300"><path d="M2 14l5.500-5.500L13 14"/><path d="M27 7.500h6v9h-6zM33.500 10l3-1.500v7l-3-1.500M28 4.500q3-2 6 0M28 19.500q3 2 6 0"/><path d="M50 7.500h3l8-2v12l-8 1.500h-3zM53 13q0-4 5-3M58 12q-1 3-5 3"/><circle cx="60" cy="17" r="3.500" fill="#f7941d" stroke="none"/><path d="M72.500 5.500h4v5h-4zM78 7.500h10v9H76v-5M80 19.500h6M83 16.500v3"/><path d="M97.500 10h2.500l3.500-3v11l-3.500-3h-2.500zM105.500 10q1.500 2.500 0 5M108 8q3 4.500 0 9M110 6q4.500 6.500 0 13"/></svg>
    <div class="clock"><span>10:16 PM</span><span>1/31/2024</span></div>
    <svg class="notif" width="26" height="26"><path d="M1 2h16v13H9l-4 4v-4H1z" fill="#fff"/><path d="M4 6h10M4 9h10M4 12h6" stroke="#1c2c40" stroke-width="1.200"/><circle cx="16" cy="17" r="8.500" fill="#2a3540" stroke="#aaa" stroke-width=".8"/><text x="16" y="21" class="five">5</text></svg>
    <i class="peek"></i>
  </div>
</div>
<div class="watermark"><p class="w1">Activate Windows</p><p class="w2">Go to Settings to activate Windows.</p></div>
</body>
</html>
```

FILE: styles.css
```css
* { box-sizing: border-box; }
body { margin: 0; width: 1600px; height: 900px; overflow: hidden; display: flex; flex-direction: column; background: #e3e5e8; font: 12px "Open Sans", "Noto Sans", sans-serif; color: #000; position: relative; }
svg, i { display: block; flex: none; }
p, h4, pre { margin: 0; }
span, b, pre { white-space: pre; }
.defs { position: absolute; }

.titlebar { height: 24px; background: #fff; border-bottom: 1px solid #e0e0e0; display: flex; flex: none; padding-left: 7px; }
.app-logo { margin: 1px 14px 0 0; }
.app-title { line-height: 17px; letter-spacing: -.35px; }
.win-ctl { margin-left: auto; margin-right: 15px; }

.vmbar { height: 34px; background: #fff; border-left: 1px solid #ddd; border-right: 1px solid #ddd; display: flex; align-items: center; flex: none; padding-bottom: 2px; }
.vmmenu { display: flex; gap: 16.2px; padding-left: 11px; padding-bottom: 2px; width: 225px; letter-spacing: -.36px; }
.vsep { height: 19px; background: linear-gradient(#c4c4c4, #c4c4c4) center / 1px 100% no-repeat; }
.w14 { width: 14px; } .w13 { width: 13px; }
.pause { margin-left: 3px; }
.toggled { width: 26px; height: 26px; margin: 0 2px; padding: 0; border: 1px solid #d8d8d8; border-radius: 3px; background: #ececec; }

.workspace { height: 782px; display: flex; flex: none; }
.library { width: 200px; padding: 0 4px; display: flex; flex-direction: column; }
.lib-head { height: 24px; display: flex; align-items: center; justify-content: space-between; padding: 0 4px 1px 0; letter-spacing: -.25px; }
.lib-x { color: #000; }
.lib-search { height: 21px; background: #fff; border: 1px solid #999fa6; display: flex; align-items: center; padding: 0 3px 0 10px; color: #555; letter-spacing: -.42px; }
.lib-search span { flex: 1; margin-left: 9px; }
.tree { margin-top: 7px; height: 726px; width: 192px; background: #fff; border: 1px solid #828790; }
.node { display: flex; align-items: center; height: 18px; letter-spacing: -.2px; padding-bottom: 1px; }
.root { padding-left: 8px; margin-top: 1px; }
.root svg + svg { margin-left: 7px; }
.root span { margin-left: 6px; }
.child { padding-left: 43px; }
.child span { margin-left: 3px; padding: 0 2px; background: #eee; letter-spacing: -.4px; }

.guest { width: 1400px; border: 1px solid #6a6d70; border-right: 1px solid #55595c; position: relative; }
.vmtabs { height: 32px; display: flex; align-items: flex-end; padding-left: 4px; gap: 5px; letter-spacing: -.5px; }
.vmtab { height: 27px; border: 1px solid #aaa; border-bottom: 0; border-radius: 4px 4px 0 0; display: flex; align-items: center; padding-left: 5px; }
.home { width: 84px; font-size: 11.500px; }
.vmtab.active { width: 105px; background: #fff; border-color: #fff; font-weight: bold; letter-spacing: -.35px; }
.vmtab.active span { margin-left: 3px; }
.vmtab span { margin-left: 3px; flex: 1; padding-bottom: 1px; }
.tx { color: #bbb; margin-right: 5px; }

.gpanel { height: 25px; background: #edeceb; border-bottom: 1px solid #a8a6a4; display: flex; align-items: center; padding-left: 8px; padding-bottom: 1px; font: 13.3px "DejaVu Sans", sans-serif; color: #1a1a1a; }
.g1 { margin-left: 6px; width: 94px; } .g2 { width: 56px; } .g3 { width: 64px; }
.ff { margin-right: 4px; }
.gclock { margin-left: 750px; width: 155px; letter-spacing: -.3px; }
.grip { width: 6px; height: 17px; background-image: radial-gradient(circle at 1px 1px, #a5a39f .8px, transparent 1px); background-size: 3px 3px; }
.box { margin-left: 5px; margin-right: 4px; }
.groot { color: #000; margin-left: 19px; }

.desk { height: 698px; background: #000; padding: 1px 2px 0 1px; }
.xtitle { height: 24px; background: linear-gradient(#555 0, #343434 2px, #2c2c2c 60%, #181818 100%); border-bottom: 1px solid #4e6d9a; border-radius: 6px 6px 0 0; display: flex; align-items: center; padding: 1px 8px 0 6px; color: #fff; font: 13.3px "DejaVu Sans", sans-serif; }
.xtitle b { flex: 1; text-align: center; padding-right: 3px; letter-spacing: .2px; }
.app { margin: 1px 0 0 2px; width: 1393px; height: 670px; background: #c8c8c8; border-right: 1px solid #eee; border-top: 1px solid #eee; font: 12px "Liberation Sans", Arial, sans-serif; }
.row { border-bottom: 1px solid #808080; border-top: 1px solid #e6e6e6; display: flex; align-items: center; }
.menu { height: 30px; border-top: 0; padding-left: 7px; gap: 15.7px; padding-top: 1px; }
.menu u { text-underline-offset: 2px; }
.mentor { margin-left: auto; margin-right: 7px; width: 53px; color: #a01f3c; font: bold 12px/9px "Liberation Sans", sans-serif; letter-spacing: -.5px; text-align: right; -webkit-text-stroke: .5px #a01f3c; transform: scaleX(1.2); transform-origin: 75% 50%; }
.mentor b { display: block; }
.tools { height: 29px; padding-bottom: 1px; }
.handle { width: 15px; align-self: stretch; border-right: 1px solid #808080; background: linear-gradient(90deg, transparent 2px, #f0f0f0 2px 3px, #c8c8c8 3px 5px, #888 5px 6px, transparent 6px 7px, #f0f0f0 7px 8px, #c8c8c8 8px 10px, #888 10px 11px, transparent 11px) 0 2px / 100% 23px no-repeat; }
.ic { width: 27px; height: 24px; filter: drop-shadow(1px 1px 1px #0005); }
.drop { margin-right: .5px; }
.tsep { width: 12px; height: 23px; background: linear-gradient(90deg, transparent 6px, #888 6px 7px, #eee 7px 8px, transparent 8px); }
.abig { font: bold 13px "Liberation Serif", serif; text-anchor: middle; }
.sel { height: 25px; font-size: 10.5px; padding-bottom: 1px; }
.sel pre { font: inherit; margin-left: 4px; letter-spacing: .02px; }
.coord { margin-left: auto; margin-right: 20px; }
.subsel { color: #8c8c8c; text-shadow: 1px 1px 0 #eee; margin-left: 5px; width: 62px; }
.combo { width: 150px; height: 20px; border: 1px solid #808080; border-right-color: #eee; border-bottom-color: #eee; display: flex; justify-content: flex-end; }
.combo i { width: 16px; border: 1px solid #808080; border-width: 0 1px 1px; display: flex; align-items: center; justify-content: center; }

.main { height: 480px; display: flex; overflow: hidden; }
.ltools { width: 29px; border-right: 1px solid #808080; padding-left: 1px; }
.hhandle { height: 16px; width: 24px; margin-left: 1px; background: linear-gradient(transparent 2px, #eee 2px 3px, #c8c8c8 3px 5px, #888 5px 6px, transparent 6px 7px, #eee 7px 8px, #c8c8c8 8px 11px, #888 11px 12px, transparent 12px 15px, #888 15px); }
.li { width: 24px; height: 27px; overflow: visible; filter: drop-shadow(1px 1px 1px #0005); }
.lsep { height: 12px; width: 23px; margin-left: 1px; background: linear-gradient(transparent 5px, #888 5px 6px, #eee 6px 7px, transparent 7px); }
.tbig { font: bold 26px "Liberation Serif", serif; text-anchor: middle; }
.tiny { font: bold 7.500px "DejaVu Sans", sans-serif; fill: #3a98d0; text-anchor: middle; letter-spacing: -.3px; }
.y5 { font: bold 13px "Liberation Sans", sans-serif; fill: #e80000; text-anchor: middle; letter-spacing: -.8px; stroke: #e80000; stroke-width: .5px; }

.center { width: 1235px; padding-left: 2px; border-right: 1px solid #808080; }
.doctabs { height: 28px; display: flex; align-items: flex-end; font: 12.5px "DejaVu Sans", sans-serif; border-bottom: 1px solid #eee; padding-left: 1px; }
.dtab { width: 175px; height: 22px; border: 1px solid #e6e6e6; border-bottom: 0; border-right-color: #808080; border-radius: 3px 3px 0 0; display: flex; align-items: center; padding: 0 6px 1px 8px; }
.dtab.on { width: 195px; height: 24px; margin-left: 1px; padding-left: 7px; padding-right: 7px; padding-bottom: 0; }
.dtab span { flex: 1; margin-left: 5px; letter-spacing: -.25px; }
.dtab b { flex: 1; margin-left: 8px; letter-spacing: -.25px; }
.g { color: #929292; } .r { color: #b02030; }
.dbtn { margin-left: auto; width: 64px; height: 26px; border-left: 1px solid #808080; padding: 4px 0 0 4px; }
.view { height: 434px; display: flex; }
.stroke-lg, .stroke-sm { opacity: .99; }
.stroke-lg text { font: 100 49px "Roboto", sans-serif; fill: #f0f; stroke: #f0f; stroke-width: .3px; text-anchor: middle; }
.stroke-sm text { font: 300 15.500px "Roboto", sans-serif; fill: #f0f; text-anchor: middle; letter-spacing: -.6px; }
.vscroll { width: 14px; display: flex; flex-direction: column; border-left: 1px solid #808080; border-right: 1px solid #808080; }
.sbtn { width: 13px; height: 14px; border: 1px solid #eee; border-right-color: #808080; border-bottom-color: #808080; display: flex; align-items: center; justify-content: center; }
.vthumb { flex: 1; border-top: 1px solid #eee; border-bottom: 1px solid #808080; background: repeating-linear-gradient(#888 0 1px, #eee 1px 2px, #c8c8c8 2px 2.500px) center / 10px 9px no-repeat; }
.hscroll { width: 1216px; height: 15px; display: flex; border-top: 1px solid #808080; border-bottom: 1px solid #808080; }
.hthumb { flex: 1; border-left: 1px solid #eee; border-right: 1px solid #808080; background: repeating-linear-gradient(90deg, #888 0 1px, #eee 1px 2px, #c8c8c8 2px 2.500px) center / 9px 10px no-repeat; }
.vsplit { width: 7px; border-left: 2px solid #dedede; border-right: 1px solid #808080; display: flex; align-items: center; padding-top: 2px; }
.vsplit i { width: 3px; height: 26px; background: repeating-linear-gradient(#888 0 2px, transparent 2px 5px); }

.palette { width: 121px; padding-top: 1px; }
.dockhead { height: 19px; background: #4863a5; color: #e8ecf6; display: flex; align-items: center; justify-content: space-between; padding: 0 4px 0 9px; font: 12.5px "DejaVu Sans", sans-serif; border-bottom: 1px solid #3c5284; }
.pbody { padding: 2px 1px 0; display: flex; flex-direction: column; }
.pb { height: 23px; flex: none; margin-bottom: 2px; border: 1px solid #e6e6e6; border-right-color: #808080; border-bottom-color: #808080; text-align: center; line-height: 22px; }
.off { color: #8c8c8c; text-shadow: 1px 1px 0 #eee; }
.soft { border: 0; height: 2px; margin: 1px -1px 3px; background: linear-gradient(#808080 50%, #eee 50%); }
h4 { margin: 2px -1px 0; height: 20px; border-top: 1px solid #000; box-shadow: inset 0 1px #eee; text-align: center; font: bold 12px/18px "Liberation Sans", sans-serif; }
.hsplit { height: 6px; border-top: 1px solid #808080; border-bottom: 1px solid #808080; padding: 1px 0 0 682px; background: #d0d0d0; }
.hsplit i { width: 26px; height: 2px; background: repeating-linear-gradient(90deg, #999 0 2px, transparent 2px 5px); }
.msg { height: 19px; font-size: 12.400px; letter-spacing: -.15px; }
.messages { height: 49px; display: flex; border-bottom: 1px solid #808080; }
.info { margin: 9px 0 0 2px; }
.lines { margin: 3px 0 0 10px; font-size: 11px; line-height: 14px; letter-spacing: -.25px; flex: 1; white-space: nowrap; }
.mscroll { width: 14px; border-left: 1px solid #808080; display: flex; flex-direction: column; }
.mthumb { flex: 1; margin-top: 6px; border: 1px solid #eee; border-bottom-color: #808080; }

.gtask { height: 25px; background: #edeceb; display: flex; align-items: center; padding-left: 4px; font: 13.3px "DejaVu Sans", sans-serif; }
.gtask .grip { margin-right: 3px; }
.task { width: 198px; height: 22px; margin-right: 3px; border: 1px solid #8d8a86; border-radius: 3px; background: linear-gradient(#fff, #e6e4e2); display: flex; align-items: center; padding-left: 6px; }
.task span { margin-left: 7px; letter-spacing: -.1px; }
.down { background: #c1bfbd; padding-top: 2px; }
.pager { margin-left: 268px; width: 77px; height: 21px; background: #aaa6a2; border: 1px solid #b8b4b0; padding-left: 1px; }
.pager i { width: 36px; height: 19px; background: #cfe0f8; border-top: 1px solid #3c5f9a; padding: 1px 0 0 9px; }
.trash { margin-left: 13px; }
.tooltip { position: absolute; left: 611px; top: 728px; width: 207px; height: 24px; border: 1px solid #8ab0dc; border-radius: 4px; background: #e6f2fe; font: 13.3px/22px "DejaVu Sans", sans-serif; text-align: center; letter-spacing: -.12px; }

.status { height: 20px; display: flex; justify-content: space-between; align-items: flex-start; padding: 0 17px 0 1px; line-height: 21px; flex: none; letter-spacing: -.3px; }
.status svg { margin-top: 2px; }
.taskbar { height: 40px; background: linear-gradient(90deg, #1f3640, #20323e 50%, #1a2740 85%, #1a2540); display: flex; flex: none; color: #fff; }
.start { width: 48px; padding: 12px 0 0 16px; }
.search { width: 288px; background: #f2f2f2; border: 1px solid #c8c8c8; border-left: 0; display: flex; align-items: center; padding-left: 11px; font-size: 15px; color: #333; }
.search span { margin-left: 11px; flex: 1; letter-spacing: -.56px; }
.tb { width: 49px; display: flex; align-items: center; justify-content: center; }
.run { border-bottom: 2px solid #76b9ed; width: 40px; margin-left: 5px; }
.tray { margin-left: auto; display: flex; align-items: center; }
.temp { margin-left: 8px; font-size: 14px; letter-spacing: -.3px; width: 92px; }
.clock { width: 68px; margin-left: 1px; text-align: center; line-height: 18px; font-size: 12px; letter-spacing: -.4px; display: flex; flex-direction: column; }
.notif { margin-left: 8px; }
.five { font: 12px "Open Sans", sans-serif; fill: #fff; text-anchor: middle; }
.peek { width: 1px; height: 40px; background: #6d7888; margin: 0 4px 0 12px; }
.watermark { position: absolute; left: 1295px; top: 774px; color: rgba(120, 120, 120, .42); }
.w1 { font-size: 19.500px; line-height: 27px; letter-spacing: -.2px; }
.w2 { font-size: 14px; line-height: 18px; letter-spacing: .25px; }
```
